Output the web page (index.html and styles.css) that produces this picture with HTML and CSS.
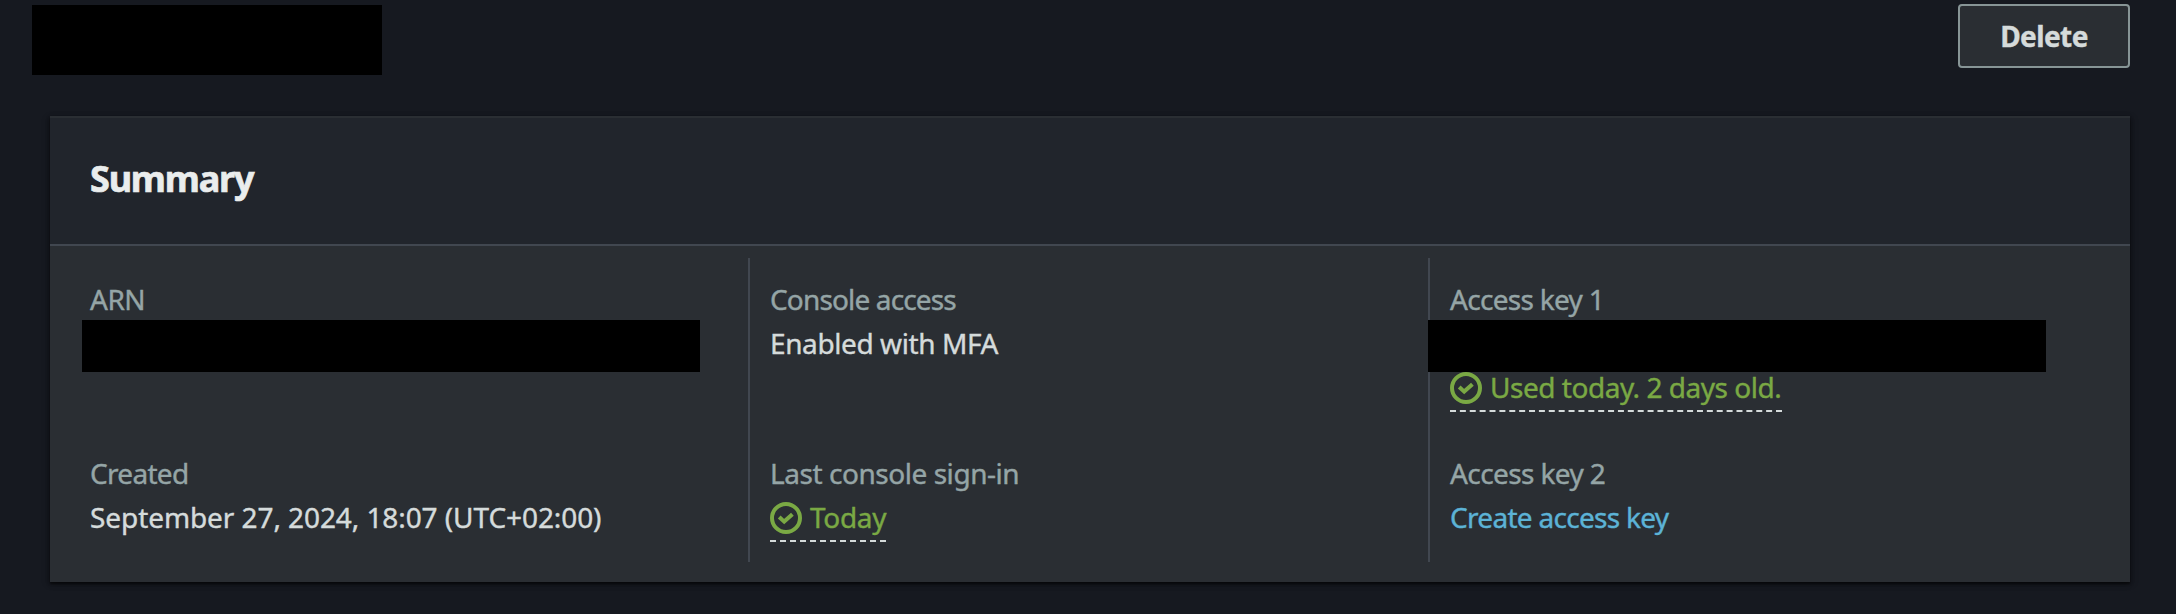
FILE: index.html
```html
<!DOCTYPE html>
<html lang="en">
<head>
<meta charset="utf-8">
<title>User summary</title>
<link rel="stylesheet" href="styles.css">
</head>
<body>
<header class="page-header">
  <div class="redacted redacted-title"></div>
  <button class="button" type="button"><span class="t-delete">Delete</span></button>
</header>
<main class="card">
  <div class="card-header"><h2 class="card-title">Summary</h2></div>
  <div class="card-body">
    <section class="column">
      <div class="field">
        <div class="label t-arn">ARN</div>
        <div class="redacted redacted-value"></div>
      </div>
      <div class="field">
        <div class="label t-created">Created</div>
        <div class="value t-date">September 27, 2024, 18:07 (UTC+02:00)</div>
      </div>
    </section>
    <section class="column divided">
      <div class="field">
        <div class="label t-console">Console access</div>
        <div class="value t-mfa">Enabled with MFA</div>
      </div>
      <div class="field">
        <div class="label t-last">Last console sign-in</div>
        <div class="status status-short">
          <svg class="icon" viewBox="0 0 16 16"><circle cx="8" cy="8" r="7"/><path d="M4.6 7.5L7.1 9.8 11.2 6.1"/></svg>
          <span class="t-today">Today</span>
        </div>
      </div>
    </section>
    <section class="column divided">
      <div class="field">
        <div class="label t-key1">Access key 1</div>
        <div class="redacted redacted-value redacted-key"></div>
        <div class="status status-long">
          <svg class="icon" viewBox="0 0 16 16"><circle cx="8" cy="8" r="7"/><path d="M4.6 7.5L7.1 9.8 11.2 6.1"/></svg>
          <span class="t-used">Used today. 2 days old.</span>
        </div>
      </div>
      <div class="field">
        <div class="label t-key2">Access key 2</div>
        <a class="value link t-create">Create access key</a>
      </div>
    </section>
  </div>
</main>
</body>
</html>
```
FILE: styles.css
```css
* { box-sizing: border-box; }
body {
  margin: 0;
  height: 614px;
  overflow: hidden;
  background: #161920;
  color: #d5dbdb;
  font: 400 28px/44px "Noto Sans", "Open Sans", sans-serif;
  white-space: nowrap;
  -webkit-text-stroke: .4px currentColor;
}
.page-header {
  display: flex;
  justify-content: space-between;
  align-items: flex-start;
  height: 116px;
  padding: 4px 46px 0 32px;
}
.redacted { background: #000; }
.redacted-title { width: 350px; height: 70px; margin-top: 1px; }
.button {
  width: 172px;
  height: 64px;
  padding: 0;
  border: 2px solid #879596;
  border-radius: 4px;
  background: #2a2e33;
  color: #d5dbdb;
  font: 700 28px/40px "Noto Sans", "Open Sans", sans-serif;
}
.card {
  width: 2080px;
  height: 466px;
  margin-left: 50px;
  border-top: 2px solid #2a2e33;
  background: #2a2e33;
  box-shadow: 0 2px 2px rgba(0, 0, 0, .5), 2px 2px 6px rgba(0, 0, 0, .25), -2px 2px 6px rgba(0, 0, 0, .25);
}
.card-header {
  height: 128px;
  padding: 36px 40px 0;
  border-bottom: 2px solid #414750;
  background: #21252c;
}
.card-title {
  margin: 0;
  color: #eaeded;
  font-size: 36px;
  line-height: 50px;
  letter-spacing: -1.2px;
  -webkit-text-stroke-width: .7px;
}
.card-body { display: flex; padding: 12px 0 20px; }
.column { width: 698px; height: 304px; padding: 19px 0 0 40px; }
.divided { width: 680px; padding-left: 20px; border-left: 2px solid #414750; }
.field { height: 174px; }
.label { color: #95a5a6; height: 44px; }
.value { display: block; height: 44px; }
.redacted-value { width: 618px; height: 52px; margin: -1px 0 0 -8px; }
.redacted-key { margin-left: -22px; }
.status {
  display: flex;
  align-items: flex-start;
  gap: 8px;
  height: 40px;
  border-bottom: 2px dashed #d5dbdb;
  color: #7aa944;
  line-height: 30px;
}
.status-short { width: 116px; margin-top: 7px; }
.status-long { width: 332px; }
.icon { flex: none; width: 32px; height: 32px; fill: none; stroke: currentColor; stroke-width: 2; }
.link { color: #5cb3d6; }

/* Tracking */
.t-delete { letter-spacing: -.6px; }
.t-arn { letter-spacing: -.5px; }
.t-created { letter-spacing: -.7px; }
.t-date { letter-spacing: -.08px; }
.t-console { letter-spacing: -.85px; }
.t-mfa { letter-spacing: -.4px; }
.t-last { letter-spacing: -.45px; }
.t-today { letter-spacing: -.3px; }
.t-key1 { letter-spacing: -.7px; }
.t-key2 { letter-spacing: -.6px; }
.t-used { letter-spacing: -.47px; }
.t-create { letter-spacing: -.7px; }
```
